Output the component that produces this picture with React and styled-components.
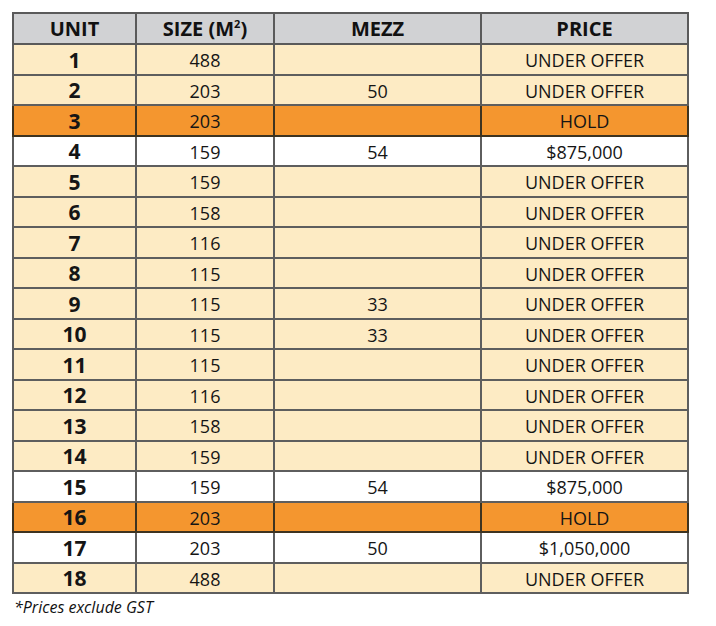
import React from 'react'
import styled, { createGlobalStyle } from 'styled-components'

const GlobalStyle = createGlobalStyle`
  body {
    margin: 0;
    background: #ffffff;
    font-family: "Open Sans", "Liberation Sans", sans-serif;
    color: #1a1a1a;
  }
`

const Page = styled.div`
  padding: 12px 0 0 12px;
  width: 678px;
`

const Table = styled.table`
  width: 677px;
  border-collapse: collapse;
  table-layout: fixed;
  border: 2px solid #4d4d4d;
`

const HeadCell = styled.th`
  background: #d1d2d4;
  height: 29px;
  padding: 0;
  border: 2px solid #5a5a5a;
  font-size: 20px;
  font-weight: 700;
  color: #111;
  text-align: center;
  line-height: 1;
  sup {
    font-size: 11px;
    vertical-align: 8px;
  }
`

const rowColours = {
  offer: '#fdebc4',
  hold: '#f4962f',
  sale: '#ffffff',
}

const Row = styled.tr`
  background: ${(p) => rowColours[p.$status]};
`

const Cell = styled.td`
  height: 26.5px;
  padding: 2px 0 0;
  border: 2px solid ${(p) => (p.$dark ? '#3d3320' : '#5e5e5e')};
  text-align: center;
  font-size: 18px;
  font-weight: ${(p) => (p.$bold ? 700 : 400)};
  ${(p) => p.$bold && 'font-size: 21px;'}
  color: #151515;
  line-height: 1;
`

const Note = styled.div`
  margin-top: 2px;
  font-size: 16px;
  font-style: italic;
  color: #111;
  padding-left: 2px;
`

const units = [
  [1, 488, '', 'UNDER OFFER', 'offer'],
  [2, 203, 50, 'UNDER OFFER', 'offer'],
  [3, 203, '', 'HOLD', 'hold'],
  [4, 159, 54, '$875,000', 'sale'],
  [5, 159, '', 'UNDER OFFER', 'offer'],
  [6, 158, '', 'UNDER OFFER', 'offer'],
  [7, 116, '', 'UNDER OFFER', 'offer'],
  [8, 115, '', 'UNDER OFFER', 'offer'],
  [9, 115, 33, 'UNDER OFFER', 'offer'],
  [10, 115, 33, 'UNDER OFFER', 'offer'],
  [11, 115, '', 'UNDER OFFER', 'offer'],
  [12, 116, '', 'UNDER OFFER', 'offer'],
  [13, 158, '', 'UNDER OFFER', 'offer'],
  [14, 159, '', 'UNDER OFFER', 'offer'],
  [15, 159, 54, '$875,000', 'sale'],
  [16, 203, '', 'HOLD', 'hold'],
  [17, 203, 50, '$1,050,000', 'sale'],
  [18, 488, '', 'UNDER OFFER', 'offer'],
]

const App = () => {
  return (
    <Page>
      <GlobalStyle />
      <Table>
        <colgroup>
          <col style={{ width: 123 }} />
          <col style={{ width: 138 }} />
          <col style={{ width: 207 }} />
          <col style={{ width: 207 }} />
        </colgroup>
        <thead>
          <tr>
            <HeadCell>UNIT</HeadCell>
            <HeadCell>
              SIZE (M<sup>2</sup>)
            </HeadCell>
            <HeadCell>MEZZ</HeadCell>
            <HeadCell>PRICE</HeadCell>
          </tr>
        </thead>
        <tbody>
          {units.map(([unit, size, mezz, price, status]) => (
            <Row key={unit} $status={status}>
              <Cell $bold $dark={status === 'hold'}>{unit}</Cell>
              <Cell $dark={status === 'hold'}>{size}</Cell>
              <Cell $dark={status === 'hold'}>{mezz}</Cell>
              <Cell $dark={status === 'hold'}>{price}</Cell>
            </Row>
          ))}
        </tbody>
      </Table>
      <Note>*Prices exclude GST</Note>
    </Page>
  )
}

export default App
